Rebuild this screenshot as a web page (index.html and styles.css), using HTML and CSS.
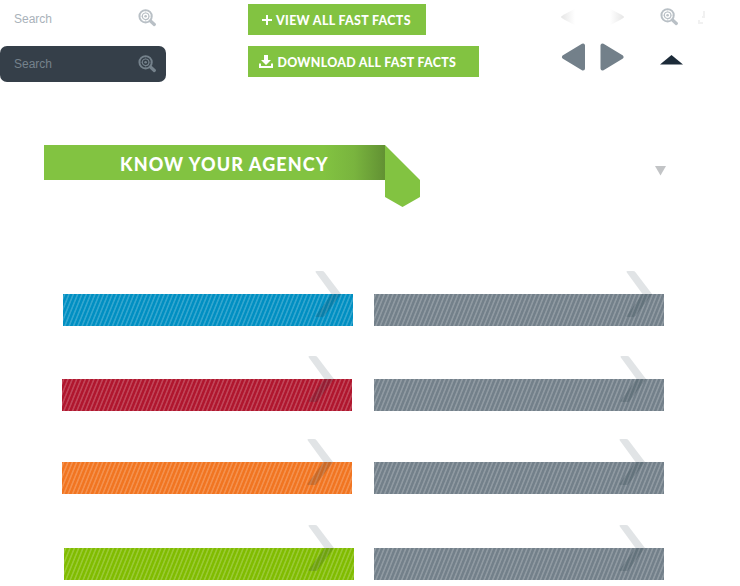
FILE: index.html
```
<!DOCTYPE html>
<html lang="en">
<head>
<meta charset="utf-8">
<title>Fast Facts</title>
<link rel="stylesheet" href="styles.css">
</head>
<body>
<svg class="defs" width="0" height="0" aria-hidden="true">
  <defs>
    <symbol id="target" viewBox="0 0 18 18">
      <circle cx="7.6" cy="7.3" r="6.2" fill="none" stroke="currentColor" stroke-width="1.9"/>
      <circle cx="7.6" cy="7.3" r="3.3" fill="none" stroke="currentColor" stroke-width="1.2"/>
      <circle cx="7.6" cy="7.3" r="1.3" fill="currentColor"/>
      <path d="M7.600 1v3M7.600 10.500v3M1.300 7.300h3M10.800 7.300h3" stroke="currentColor" stroke-width=".7" opacity=".6"/>
      <path d="M12.500 12l3.800 3.500" stroke="currentColor" stroke-width="3.2" stroke-linecap="round"/>
    </symbol>
    <symbol id="chevron" viewBox="0 0 27 46">
      <path d="M1.500 0H7Q8.600 0 9.500 1.200L26 23 9.500 45Q8.800 46 7.500 46H1.500Q-.2 46 1 44.300L16.500 23 1 1.700Q-.2 0 1.500 0Z" fill="#2d404c" fill-opacity=".14"/>
    </symbol>
    <symbol id="chevron-low" viewBox="0 0 27 46">
      <path d="M16.500 23H26L9.500 45Q8.800 46 7.500 46H1.500Q-.2 46 1 44.300Z" fill="#1e2d38" fill-opacity=".06"/>
    </symbol>
    <pattern id="stripes" width="4.330" height="32" patternUnits="userSpaceOnUse" patternTransform="skewX(-22)">
      <path d="M1 0h1.500v32H1z" fill="#fff" fill-opacity=".23"/>
    </pattern>
  </defs>
</svg>
<header class="top">
  <div class="searches">
    <div class="search"><span>Search</span><svg class="lens"><use href="#target"/></svg></div>
    <div class="search dark"><span>Search</span><svg class="lens"><use href="#target"/></svg></div>
  </div>
  <div class="buttons">
    <a class="button view"><svg class="plus" viewBox="0 0 10 10"><path d="M5 0v10M0 5h10" stroke="#fff" stroke-width="2"/></svg><span>VIEW ALL FAST FACTS</span></a>
    <a class="button download"><svg class="tray" viewBox="0 0 14 13"><path d="M5 0h4v5h3L7 10 2 5h3zM0 8.500h2V11h10V8.500h2V13H0z" fill="#fff"/></svg><span>DOWNLOAD ALL FAST FACTS</span></a>
  </div>
  <div class="arrows">
    <svg class="faint-pair" viewBox="0 0 64 16">
      <defs>
        <linearGradient id="fadeL"><stop stop-color="#e6e6e6"/><stop offset="1" stop-color="#fff"/></linearGradient>
        <linearGradient id="fadeR"><stop stop-color="#fff"/><stop offset="1" stop-color="#e6e6e6"/></linearGradient>
      </defs>
      <path d="M0 8Q0 6.500 14 0V16Q0 9.500 0 8Z" fill="url(#fadeL)"/>
      <path d="M63 8Q63 6.500 49 0V16Q63 9.500 63 8Z" fill="url(#fadeR)"/>
    </svg>
    <svg class="pair" viewBox="0 0 64 28">
      <g fill="#73808a" stroke="#73808a" stroke-width="4" stroke-linejoin="round"><path d="M3 14L22 2.500V25.500Z"/><path d="M60.500 14L41.500 2.500V25.500Z"/></g>
    </svg>
  </div>
  <div class="glyphs">
    <svg class="lens"><use href="#target"/></svg>
    <svg class="up" viewBox="0 0 24 10"><path d="M0 9.500L11.500 0 23 9.500Z" fill="#1c2b39"/></svg>
  </div>
  <svg class="ghost" viewBox="0 0 8 14"><path d="M0 9h2v2h3v2H0zM5 0h2v7H4V5h1z" fill="#f1f1f1"/></svg>
</header>
<section class="heading">
  <h1>KNOW YOUR AGENCY</h1>
  <svg class="fold" viewBox="0 0 35 62"><path d="M0 0L35 35V52L17.500 62 0 52Z" fill="#82c341"/></svg>
  <svg class="down" viewBox="0 0 12 10"><path d="M0 0H11L5.500 9.500Z" fill="#c2c4c6"/></svg>
</section>
<main class="rows">
  <div class="row blue">
    <div class="bar"><svg class="fill"><rect width="290" height="32" fill="url(#stripes)"/></svg><svg class="chev"><use href="#chevron"/><use href="#chevron-low"/></svg></div>
    <div class="bar slate"><svg class="fill"><rect width="290" height="32" fill="url(#stripes)"/></svg><svg class="chev"><use href="#chevron"/><use href="#chevron-low"/></svg></div>
  </div>
  <div class="row red">
    <div class="bar"><svg class="fill"><rect width="290" height="32" fill="url(#stripes)"/></svg><svg class="chev"><use href="#chevron"/><use href="#chevron-low"/></svg></div>
    <div class="bar slate"><svg class="fill"><rect width="290" height="32" fill="url(#stripes)"/></svg><svg class="chev"><use href="#chevron"/><use href="#chevron-low"/></svg></div>
  </div>
  <div class="row orange">
    <div class="bar"><svg class="fill"><rect width="290" height="32" fill="url(#stripes)"/></svg><svg class="chev"><use href="#chevron"/><use href="#chevron-low"/></svg></div>
    <div class="bar slate"><svg class="fill"><rect width="290" height="32" fill="url(#stripes)"/></svg><svg class="chev"><use href="#chevron"/><use href="#chevron-low"/></svg></div>
  </div>
  <div class="row green">
    <div class="bar"><svg class="fill"><rect width="290" height="32" fill="url(#stripes)"/></svg><svg class="chev"><use href="#chevron"/><use href="#chevron-low"/></svg></div>
    <div class="bar slate"><svg class="fill"><rect width="290" height="32" fill="url(#stripes)"/></svg><svg class="chev"><use href="#chevron"/><use href="#chevron-low"/></svg></div>
  </div>
</main>
</body>
</html>
```
FILE: styles.css
```
* { box-sizing: border-box; }
body { margin: 0; width: 740px; height: 586px; overflow: hidden; background: #fff; font-family: Lato, sans-serif; }
svg { display: block; flex: none; }
.defs { position: absolute; }

.top { display: flex; height: 82px; }
.searches { width: 166px; margin-right: 82px; }
.search { display: flex; align-items: flex-start; justify-content: space-between; height: 36px; padding: 9px 10px 0 14px; font: 12px/20px "Liberation Sans", Arial, sans-serif; color: #a9b2ba; }
.search:first-child { height: 46px; }
.search .lens { color: #b9c0c6; }
.search.dark { border-radius: 7px; background: #353f49; color: #75828c; padding-top: 8px; }
.search.dark .lens { color: #75828c; margin-top: 1px; }
.lens { width: 18px; height: 18px; }

.buttons { width: 231px; padding-top: 4px; margin-right: 82px; }
.button { display: flex; align-items: center; height: 31px; background: #82c341; color: #fff; font-size: 12.4px; line-height: 31px; font-weight: 900; white-space: nowrap; }
.button span { padding-top: 1px; }
.view { width: 178px; margin-bottom: 11px; padding-left: 14px; gap: 4px; letter-spacing: .34px; }
.download { padding-left: 11px; gap: 4.5px; letter-spacing: .3px; }
.plus { width: 10px; height: 10px; }
.tray { width: 14px; height: 13px; }

.arrows { width: 64px; padding-top: 9px; margin-right: 35px; }
.faint-pair { width: 64px; height: 16px; margin-bottom: 18px; }
.pair { width: 64px; height: 28px; }
.glyphs { width: 24px; padding-top: 8px; margin-right: 14px; }
.glyphs .lens { color: #b9c0c6; }
.up { width: 24px; height: 10px; margin-top: 29px; }
.ghost { width: 8px; height: 14px; margin-top: 11px; }

.heading { display: flex; height: 62px; margin: 63px 0 0 44px; }
.heading h1 { margin: 0; width: 341px; height: 35px; padding: 1px 0 0 76px; color: #fff; font-size: 18px; line-height: 36px; font-weight: 900; letter-spacing: 1.12px; white-space: nowrap; background: linear-gradient(90deg, #82c341 82%, #79b43e 91%, #629133); }
.fold { width: 35px; height: 62px; }
.down { width: 12px; height: 10px; margin: 21px 0 0 235px; }

.rows { padding: 87px 76px 0 62px; }
.row { display: flex; justify-content: space-between; height: 32px; }
.bar { position: relative; width: 290px; height: 32px; background: #73808a; }
.fill { width: 290px; height: 32px; }
.chev { position: absolute; width: 27px; height: 46px; left: 246px; top: -23px; }
.blue { margin-bottom: 53px; padding-left: 1px; }
.blue .bar:first-child { background: #008fc2; }
.blue .chev { left: 252px; }
.red { margin-bottom: 51px; }
.red .bar:first-child { background: #b0162e; }
.orange { margin-bottom: 54px; }
.orange .bar:first-child { background: #f17521; }
.orange .chev { left: 245px; }
.green { padding-left: 2px; }
.green .bar:first-child { background: #80bc00; }
.green .chev { left: 244px; }
.green .slate .chev { left: 245px; }
```
